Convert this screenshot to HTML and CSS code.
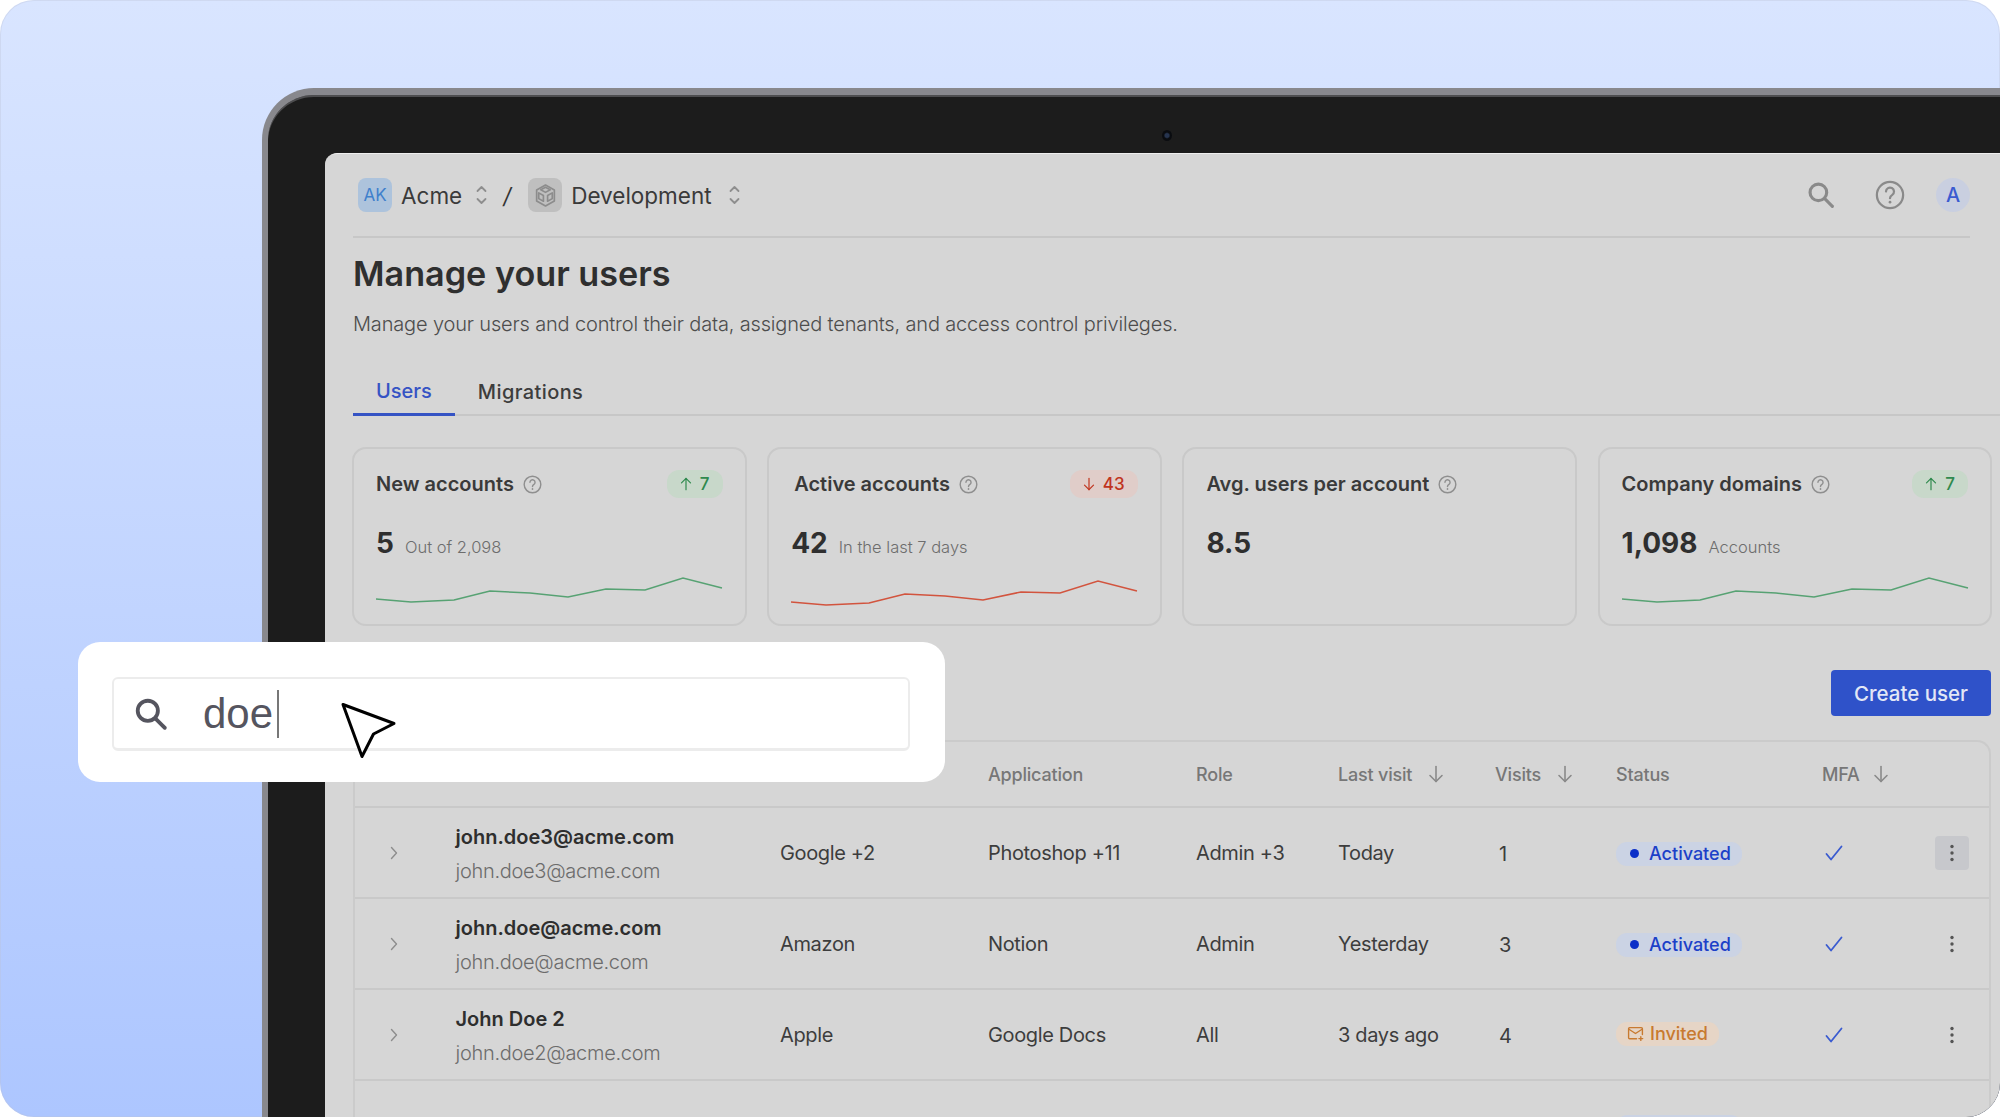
FILE: index.html
```html
<!DOCTYPE html>
<html lang="en">
<head>
  <meta charset="UTF-8" />
  <meta name="viewport" content="width=device-width, initial-scale=1.0" />
  <title>Manage your users</title>
  <link rel="stylesheet" href="styles.css">
</head>
<body>
  <svg class="sprite" aria-hidden="true">
    <symbol id="i-help" viewBox="0 0 24 24" fill="none" stroke="currentColor" stroke-width="1.8" stroke-linecap="round">
      <circle cx="12" cy="12" r="10.5" />
      <path d="M8.8 9.2a3.2 3.2 0 1 1 5 2.7c-1.1.7-1.8 1.3-1.8 2.6" />
      <path d="M12 17.6v.1" stroke-width="2.2" />
    </symbol>
    <symbol id="i-updown" viewBox="0 0 12 24" fill="none" stroke="currentColor" stroke-width="1.8" stroke-linecap="round" stroke-linejoin="round">
      <path d="M2 8l4-4 4 4" />
      <path d="M2 16l4 4 4-4" />
    </symbol>
    <symbol id="i-down" viewBox="0 0 16 18" fill="none" stroke="currentColor" stroke-width="1.6" stroke-linecap="round" stroke-linejoin="round">
      <path d="M8 1.5v15" />
      <path d="M2 10.5l6 6 6-6" />
    </symbol>
    <symbol id="i-check" viewBox="0 0 18 16" fill="none" stroke="currentColor" stroke-width="1.8" stroke-linecap="round" stroke-linejoin="round">
      <path d="M1.5 9l4.5 5.5L16.500 1.500" />
    </symbol>
    <symbol id="i-chevron" viewBox="0 0 8 14" fill="none" stroke="currentColor" stroke-width="1.4" stroke-linecap="round" stroke-linejoin="round">
      <path d="M1.500 1.500L6.500 7l-5 5.500" />
    </symbol>
    <symbol id="i-dots" viewBox="0 0 4 18" fill="currentColor">
      <circle cx="2" cy="2.500" r="1.700" />
      <circle cx="2" cy="9" r="1.700" />
      <circle cx="2" cy="15.500" r="1.700" />
    </symbol>
    <symbol id="i-search" viewBox="0 0 32 32" fill="none" stroke="currentColor" stroke-width="3.600" stroke-linecap="round">
      <circle cx="13" cy="13" r="9.500" />
      <path d="M20.500 20.500l8.500 8.500" />
    </symbol>
  </svg>

  <main class="stage">
    <div class="laptop">
      <span class="camera"></span>
      <div class="screen">

        <header class="topbar">
          <span class="avatar avatar-acme">AK</span>
          <span class="crumb">Acme</span>
          <svg class="updown"><use href="#i-updown" /></svg>
          <span class="slash">/</span>
          <span class="avatar avatar-dev">
            <svg viewBox="0 0 24 24" width="25" height="25" fill="none" stroke="currentColor" stroke-width="1.600" stroke-linejoin="round">
              <path d="M12 2l8.500 4.800v10.400L12 22l-8.500-4.800V6.800z" />
              <path d="M7.500 6.500L12 4l4.500 2.500L12 9z" />
              <path d="M5.500 9.500l4.500 2.500v5.500l-4.500-2.500z" />
              <path d="M18.500 9.500L14 12v5.500l4.500-2.500z" />
            </svg>
          </span>
          <span class="crumb">Development</span>
          <svg class="updown updown-dev"><use href="#i-updown" /></svg>
          <div class="topbar-right">
            <svg class="top-search"><use href="#i-search" /></svg>
            <svg class="top-help"><use href="#i-help" /></svg>
            <span class="avatar avatar-user">A</span>
          </div>
        </header>

        <h1 class="title">Manage your users</h1>
        <p class="subtitle">Manage your users and control their data, assigned tenants, and access control privileges.</p>

        <nav class="tabs">
          <a class="tab active">Users</a>
          <a class="tab">Migrations</a>
        </nav>

        <section class="cards">
          <article class="card">
            <div class="card-head">
              <span class="card-title">New accounts</span>
              <svg class="help"><use href="#i-help" /></svg>
              <span class="pill up"><svg class="arrow up-arrow"><use href="#i-down" /></svg>7</span>
            </div>
            <div class="card-value"><b>5</b><span>Out of 2,098</span></div>
            <svg class="spark green" viewBox="0 0 346 30"><polyline points="0,24 35,27 78,25 114,16 154,18 192,22 230,14 269,15 307,3 346,13" /></svg>
          </article>
          <article class="card card-active">
            <div class="card-head">
              <span class="card-title">Active accounts</span>
              <svg class="help"><use href="#i-help" /></svg>
              <span class="pill down"><svg class="arrow"><use href="#i-down" /></svg>43</span>
            </div>
            <div class="card-value"><b>42</b><span>In the last 7 days</span></div>
            <svg class="spark red" viewBox="0 0 346 30"><polyline points="0,24 35,27 78,25 114,16 154,18 192,22 230,14 269,15 307,3 346,13" /></svg>
          </article>
          <article class="card">
            <div class="card-head">
              <span class="card-title">Avg. users per account</span>
              <svg class="help"><use href="#i-help" /></svg>
            </div>
            <div class="card-value"><b>8.5</b></div>
          </article>
          <article class="card">
            <div class="card-head">
              <span class="card-title">Company domains</span>
              <svg class="help"><use href="#i-help" /></svg>
              <span class="pill up"><svg class="arrow up-arrow"><use href="#i-down" /></svg>7</span>
            </div>
            <div class="card-value"><b>1,098</b><span>Accounts</span></div>
            <svg class="spark green" viewBox="0 0 346 30"><polyline points="0,24 35,27 78,25 114,16 154,18 192,22 230,14 269,15 307,3 346,13" /></svg>
          </article>
        </section>

        <div class="toolbar">
          <button class="create-btn">Create user</button>
        </div>

        <section class="table">
          <div class="row head">
            <span></span>
            <span></span>
            <span></span>
            <span>Application</span>
            <span>Role</span>
            <span class="sortable">Last visit<svg class="sort"><use href="#i-down" /></svg></span>
            <span class="sortable">Visits<svg class="sort"><use href="#i-down" /></svg></span>
            <span>Status</span>
            <span class="sortable">MFA<svg class="sort sort-tight"><use href="#i-down" /></svg></span>
            <span></span>
          </div>

          <div class="row">
            <svg class="chevron"><use href="#i-chevron" /></svg>
            <div class="user"><b>john.doe3@acme.com</b><span>john.doe3@acme.com</span></div>
            <span>Google +2</span>
            <span>Photoshop +11</span>
            <span>Admin +3</span>
            <span>Today</span>
            <span class="visits">1</span>
            <div><span class="status activated"><i class="dot"></i>Activated</span></div>
            <svg class="check"><use href="#i-check" /></svg>
            <span class="more hover"><svg class="dots"><use href="#i-dots" /></svg></span>
          </div>

          <div class="row">
            <svg class="chevron"><use href="#i-chevron" /></svg>
            <div class="user"><b>john.doe@acme.com</b><span>john.doe@acme.com</span></div>
            <span>Amazon</span>
            <span>Notion</span>
            <span>Admin</span>
            <span>Yesterday</span>
            <span class="visits">3</span>
            <div><span class="status activated"><i class="dot"></i>Activated</span></div>
            <svg class="check"><use href="#i-check" /></svg>
            <span class="more"><svg class="dots"><use href="#i-dots" /></svg></span>
          </div>

          <div class="row">
            <svg class="chevron"><use href="#i-chevron" /></svg>
            <div class="user"><b>John Doe 2</b><span>john.doe2@acme.com</span></div>
            <span>Apple</span>
            <span>Google Docs</span>
            <span>All</span>
            <span>3 days ago</span>
            <span class="visits">4</span>
            <div>
              <span class="status invited">
                <svg class="mail" viewBox="0 0 16 16" fill="none" stroke="currentColor" stroke-width="1.300" stroke-linecap="round" stroke-linejoin="round">
                  <path d="M9 13H2.500a1 1 0 0 1-1-1V3.500a1 1 0 0 1 1-1h11a1 1 0 0 1 1 1V9" />
                  <path d="M1.800 4l6.200 4 6.200-4" />
                  <path d="M13 11v3.500M11.200 12.800h3.600" />
                </svg>Invited
              </span>
            </div>
            <svg class="check"><use href="#i-check" /></svg>
            <span class="more"><svg class="dots"><use href="#i-dots" /></svg></span>
          </div>

          <div class="row">
            <span></span><span></span><span></span><span></span><span></span><span></span><span></span>
            <div><span class="status-stub"></span></div>
          </div>
        </section>
      </div>
    </div>

    <div class="search-card">
      <div class="search-input">
        <svg class="search-icon"><use href="#i-search" /></svg>
        <span class="search-text">doe</span>
        <span class="caret"></span>
      </div>
    </div>

    <svg class="pointer" viewBox="0 0 60 60" fill="#fff" stroke="#000" stroke-width="3" stroke-linejoin="round">
      <path d="M5 3.500L56 22.500 35.500 33 24 55.500z" />
    </svg>
  </main>
</body>
</html>
```

FILE: styles.css
```css
* {
  box-sizing: border-box;
}

html,
body {
  margin: 0;
  background: #fff;
}

body {
  font-family: 'Inter', 'Liberation Sans', sans-serif;
  color: #3a3a3a;
}

.sprite {
  position: absolute;
  width: 0;
  height: 0;
}

.stage {
  position: relative;
  width: 2000px;
  height: 1117px;
  overflow: hidden;
  padding: 88px 0 0 262px;
  background: linear-gradient(180deg, #d9e5ff 0%, #adc6ff 100%);
  border-radius: 34px;
  box-shadow: inset 0 0 0 1px rgba(190, 195, 215, 0.35);
}

/* laptop frame */
.laptop {
  position: relative;
  width: 1900px;
  height: 1100px;
  padding: 58px 0 0 57px;
  background: #1c1c1c;
  border-top: 7px solid #88888d;
  border-left: 6px solid #88888d;
  border-top-left-radius: 52px;
  box-shadow: inset 0 2px 0 #4d4d4f;
}

.camera {
  position: absolute;
  left: 894px;
  top: 35px;
  width: 10px;
  height: 11px;
  border-radius: 50%;
  background: radial-gradient(circle, #26344f 0 25%, #0a0c10 45%);
}

.screen {
  width: 1675px;
  height: 1040px;
  padding: 25px 8px 0 28px;
  background: #d6d6d6;
  border-top: 1px solid #efefef;
  border-top-left-radius: 12px;
}

/* top bar */
.topbar {
  display: flex;
  align-items: center;
  height: 59px;
  margin-right: 22px;
  padding: 0 0 25px 5px;
  border-bottom: 2px solid #c7c7c7;
}

.avatar {
  display: flex;
  align-items: center;
  justify-content: center;
  flex: none;
  width: 34px;
  height: 34px;
  border-radius: 8px;
  font-size: 17px;
}

.avatar-acme {
  background: #adc3dc;
  color: #3f80cc;
}

.avatar-dev {
  background: #bfbfbf;
  color: #8c8c8c;
}

.avatar-user {
  border-radius: 50%;
  background: #c9cfe0;
  color: #3a5bd0;
  font-weight: 500;
  font-size: 20px;
}

.crumb {
  margin-left: 9px;
  font-size: 22.500px;
  color: #3a3a3a;
}

.updown {
  width: 13px;
  height: 24px;
  margin-left: 13px;
  color: #8e8e8e;
}

.updown-dev {
  margin-left: 16px;
}

.slash {
  margin: 2px 17px 0 15px;
  font-size: 22px;
  font-style: italic;
  color: #333;
}

.topbar-right {
  display: flex;
  align-items: center;
  margin-left: auto;
}

.top-search {
  width: 28px;
  height: 28px;
  color: #8a8a8a;
}

.top-help {
  width: 30px;
  height: 30px;
  margin: 0 31px 0 40px;
  color: #8a8a8a;
}

/* heading */
.title {
  margin: 14px 0 0;
  font-size: 34.200px;
  line-height: 44px;
  font-weight: 600;
  color: #2f2f2f;
}

.subtitle {
  margin: 14px 0 0;
  font-size: 20px;
  line-height: 28px;
  font-weight: 300;
  letter-spacing: -0.16px;
  color: #4d4d4d;
}

.tabs {
  display: flex;
  height: 48px;
  margin: 30px -8px 0 0;
  border-bottom: 2px solid #c7c7c7;
}

.tab {
  display: flex;
  align-items: center;
  height: 48px;
  padding: 0 23px;
  font-size: 20px;
  font-weight: 500;
  letter-spacing: 0.4px;
  color: #3d3d3d;
}

.tab.active {
  letter-spacing: 0;
  color: #3553c4;
  border-bottom: 3px solid #3553c4;
}

/* stat cards */
.cards {
  display: grid;
  grid-template-columns: repeat(4, 394.500px);
  gap: 20.700px;
  margin: 31px 0 0 -1px;
}

.card {
  display: flex;
  flex-direction: column;
  height: 179px;
  padding: 21px 22px 0;
  border: 2px solid #c9c9c9;
  border-radius: 14px;
}

.card-head {
  display: flex;
  align-items: center;
  height: 28px;
  gap: 9px;
}

.card-active .card-title {
  margin-left: 3px;
}

.card-title {
  font-size: 20px;
  font-weight: 600;
  color: #3a3a3a;
}

.help {
  width: 19px;
  height: 19px;
  color: #8f8f8f;
}

.pill {
  display: flex;
  align-items: center;
  justify-content: center;
  gap: 8px;
  height: 28px;
  margin-left: auto;
  padding: 0 13px;
  border-radius: 12px;
  font-size: 17px;
  font-weight: 500;
}

.pill.up {
  background: #c8d8ca;
  color: #2f8a4e;
}

.pill.down {
  background: #e0cdc9;
  color: #c0341e;
}

.arrow {
  width: 12px;
  height: 14px;
}

.up-arrow {
  transform: rotate(180deg);
}

.card-value {
  display: flex;
  align-items: baseline;
  gap: 11px;
  margin-top: 27px;
  line-height: 36px;
}

.card-value b {
  font-size: 28px;
  font-weight: 700;
  color: #2f2f2f;
}

.card-value span {
  font-size: 16.500px;
  font-weight: 300;
  color: #6d6d6d;
}

.spark {
  width: 346px;
  height: 30px;
  margin-top: 10px;
  overflow: visible;
}

.spark polyline {
  fill: none;
  stroke-width: 1.500;
}

.spark.green polyline {
  stroke: #57a273;
}

.spark.red polyline {
  stroke: #d2543e;
}

.card-active .spark {
  margin-top: 13px;
}

/* toolbar */
.toolbar {
  display: flex;
  justify-content: flex-end;
  margin: 44px 1px 0 0;
}

.create-btn {
  width: 160px;
  height: 46px;
  border: none;
  border-radius: 4px;
  background: #2f52c9;
  color: #e2e7f6;
  font-family: inherit;
  font-size: 20.500px;
  font-weight: 500;
}

/* table */
.table {
  width: 1638px;
  margin-top: 24px;
  border: 2px solid #cbcbcb;
  border-bottom: none;
  border-radius: 14px 14px 0 0;
}

.row {
  display: grid;
  grid-template-columns: 100px 325px 208px 208px 142px 157px 121px 206px 113px 56px;
  align-items: center;
  height: 91px;
  border-top: 2px solid #c9c9c9;
  font-size: 20px;
  font-weight: 400;
  letter-spacing: -0.35px;
  color: #3d3d3d;
}

.row.head {
  height: 64px;
  border-top: none;
  font-size: 18px;
  font-weight: 500;
  letter-spacing: -0.2px;
  color: #777;
}

.sortable {
  display: flex;
  align-items: center;
}

.sort {
  width: 16px;
  height: 18px;
  margin-left: 16px;
  color: #8a8a8a;
}

.sort-tight {
  margin-left: 13px;
}

.chevron {
  width: 8px;
  height: 14px;
  margin-left: 35px;
  color: #8d8d8d;
}

.user {
  display: flex;
  flex-direction: column;
  gap: 8px;
  margin: 2px 0 0 0.500px;
}

.user b {
  font-weight: 600;
  line-height: 26px;
  letter-spacing: 0;
  color: #2e2e2e;
}

.user span {
  font-weight: 300;
  line-height: 26px;
  letter-spacing: -0.3px;
  color: #6c6c6c;
}

.visits {
  margin: 3px 0 0 4px;
}

.status {
  display: inline-flex;
  align-items: center;
  height: 24px;
  padding: 0 11px 0 14px;
  border-radius: 11px;
  font-size: 18px;
  font-weight: 500;
  letter-spacing: 0;
}

.status.activated {
  background: #cbd3e4;
  color: #1c40c8;
}

.status.invited {
  padding-left: 11px;
  background: #e6d5c6;
  color: #c87a30;
}

.status-stub {
  display: block;
  width: 126px;
  height: 24px;
  margin-top: 2px;
  border-radius: 11px;
  background: #cbd3e4;
}

.dot {
  width: 9px;
  height: 9px;
  margin-right: 10px;
  border-radius: 50%;
  background: #0b2fc8;
}

.mail {
  width: 17px;
  height: 17px;
  margin-right: 6px;
}

.check {
  width: 18px;
  height: 16px;
  margin-left: 3px;
  color: #3a5bd0;
}

.more {
  display: flex;
  align-items: center;
  justify-content: center;
  width: 34px;
  height: 34px;
  border-radius: 4px;
  color: #555;
}

.more.hover {
  background: #c7c8cc;
}

.dots {
  width: 4px;
  height: 18px;
}

/* floating search */
.search-card {
  position: absolute;
  left: 78px;
  top: 642px;
  width: 867px;
  height: 140px;
  padding: 35px 35px 35px 34px;
  border-radius: 22px;
  background: #fff;
}

.search-input {
  display: flex;
  align-items: center;
  height: 74px;
  padding-left: 20px;
  border: 2px solid #ececec;
  border-bottom-width: 3px;
  border-radius: 6px;
  background: #fff;
}

.search-icon {
  width: 34px;
  height: 34px;
  color: #55555f;
}

.search-text {
  margin-left: 35px;
  font-family: 'Liberation Sans', Arial, sans-serif;
  font-size: 42px;
  color: #55555f;
}

.caret {
  width: 2px;
  height: 48px;
  margin-left: 4px;
  background: #777;
}

.pointer {
  position: absolute;
  left: 338px;
  top: 701px;
  width: 60px;
  height: 60px;
}
```
